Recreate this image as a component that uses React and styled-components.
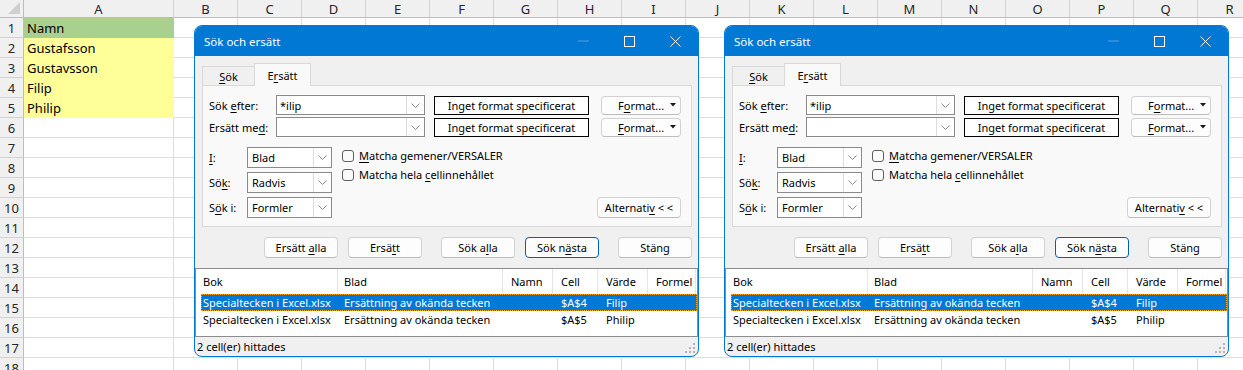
import React from 'react';
import styled, { createGlobalStyle } from 'styled-components';

const GlobalStyle = createGlobalStyle`
  html, body { margin: 0; padding: 0; background: #fff; }
  body { width: 1243px; height: 370px; overflow: hidden; font-family: "Noto Sans", sans-serif; }
  *, *::before, *::after { box-sizing: border-box; }
`;

const Stage = styled.div`
  position: relative;
  width: 1243px;
  height: 370px;
  overflow: hidden;
`;

/* ---------- spreadsheet ---------- */
const Sheet = styled.div`
  display: grid;
  grid-template-columns: 24px 150px repeat(17, 64px);
  grid-template-rows: 18px repeat(18, 20px);
  font-family: "Noto Sans", sans-serif;
  font-size: 13px;
  color: #000;
`;

const ColHead = styled.div`
  background: #f0f0f0;
  border-right: 1px solid #d2d2d2;
  border-bottom: 1px solid #bdbdbd;
  display: flex;
  align-items: center;
  justify-content: center;
  color: #262626;
`;

const Corner = styled(ColHead)`
  position: relative;
  border-right-color: #bdbdbd;
  &::after {
    content: '';
    position: absolute;
    right: 3px;
    bottom: 3px;
    width: 12px;
    height: 12px;
    background: #cfcfcf;
    clip-path: polygon(100% 0, 100% 100%, 0 100%);
  }
`;

const RowHead = styled.div`
  background: #f0f0f0;
  border-right: 1px solid #bdbdbd;
  border-bottom: 1px solid #d2d2d2;
  display: flex;
  align-items: center;
  justify-content: center;
  color: #262626;
`;

const Cell = styled.div`
  background: ${p => p.$fill || '#fff'};
  border-right: 1px solid ${p => p.$fill || '#dcdcdc'};
  border-bottom: 1px solid ${p => p.$fill || '#dcdcdc'};
  display: flex;
  align-items: center;
  padding: 1px 0 0 3px;
  white-space: nowrap;
`;

/* ---------- dialog ---------- */
const Window = styled.div`
  position: absolute;
  left: ${p => p.$left}px;
  top: 25px;
  width: 505px;
  height: 332px;
  border: 1px solid #0078d4;
  border-radius: 8px;
  overflow: hidden;
  background: #f0f0f0;
  display: flex;
  flex-direction: column;
  font-family: "Noto Sans", sans-serif;
  font-size: 11px;
  color: #000;
`;

const TitleBar = styled.div`
  height: 30px;
  flex: none;
  background: #0078d4;
  color: #fff;
  display: flex;
  align-items: center;
  padding-left: 9px;
  font-size: 11.5px;
`;

const Title = styled.div`
  flex: 1;
`;

const CaptionButton = styled.div`
  width: 46px;
  height: 30px;
  display: flex;
  align-items: center;
  justify-content: center;
`;

const Body = styled.div`
  flex: 1;
  display: flex;
  flex-direction: column;
`;

const TabStrip = styled.div`
  height: 29px;
  flex: none;
  display: flex;
  align-items: flex-end;
  padding-left: 7px;
`;

const Tab = styled.div`
  position: relative;
  z-index: ${p => (p.$active ? 1 : 0)};
  width: ${p => (p.$active ? 57 : 52)}px;
  height: ${p => (p.$active ? 23 : 19)}px;
  margin-bottom: ${p => (p.$active ? -1 : 0)}px;
  background: ${p => (p.$active ? '#f9f9f9' : '#f0f0f0')};
  border: 1px solid #d9d9d9;
  border-bottom: none;
  border-right: ${p => (p.$active ? '1px solid #d9d9d9' : 'none')};
  display: flex;
  align-items: center;
  justify-content: center;
  padding-top: ${p => (p.$active ? 0 : 1)}px;
`;

const Panel = styled.div`
  height: 142px;
  flex: none;
  margin: 0 6px 0 7px;
  background: #f9f9f9;
  border: 1px solid #d9d9d9;
  padding: 9px 10px 0 6px;
  display: flex;
  flex-direction: column;
`;

const FieldRow = styled.div`
  display: flex;
  align-items: center;
  height: 20px;
  & + & { margin-top: 2px; }
`;

const FieldLabel = styled.div`
  width: ${p => p.$w}px;
  flex: none;
  white-space: nowrap;
`;

const U = styled.span`
  text-decoration: underline;
  text-underline-offset: 2px;
`;

const Combo = styled.div`
  width: ${p => p.$w}px;
  height: ${p => p.$h}px;
  flex: none;
  background: #fff;
  border: 1px solid #8a8a8a;
  display: flex;
`;

const ComboText = styled.div`
  flex: 1;
  display: flex;
  align-items: center;
  padding-left: ${p => p.$pad}px;
`;

const ComboArrow = styled.div`
  width: 18px;
  border-left: 1px solid #dedede;
  display: flex;
  align-items: center;
  justify-content: center;
`;

const FormatBox = styled.div`
  margin-left: 9px;
  width: 155px;
  height: 19px;
  flex: none;
  background: #fff;
  border: 1px solid #000;
  display: flex;
  align-items: center;
  justify-content: center;
`;

const Button = styled.div`
  width: ${p => p.$w}px;
  height: ${p => p.$h || 21}px;
  flex: none;
  margin-left: ${p => p.$ml || 0}px;
  background: #fdfdfd;
  border: 1px solid ${p => (p.$primary ? '#005fb8' : '#d2d2d2')};
  border-bottom-color: ${p => (p.$primary ? '#005fb8' : '#bcbcbc')};
  border-radius: 4px;
  display: flex;
  align-items: center;
  justify-content: center;
  white-space: pre;
`;

const FormatButton = styled(Button)`
  justify-content: flex-start;
  padding: 0 4px 0 16px;
`;

const FormatText = styled.span`
  flex: 1;
`;

const Options = styled.div`
  margin-top: 10px;
  height: 72px;
  display: flex;
`;

const Selects = styled.div`
  display: grid;
  grid-template-columns: 38px 85px;
  grid-auto-rows: 21px;
  row-gap: 4px;
  align-items: center;
`;

const Checks = styled.div`
  margin-left: 10px;
  margin-top: -1px;
  display: flex;
  flex-direction: column;
`;

const CheckRow = styled.div`
  height: 19px;
  display: flex;
  align-items: center;
  gap: 5px;
`;

const CheckBox = styled.div`
  width: 12px;
  height: 12px;
  border: 1px solid #5f5f5f;
  border-radius: 3px;
  background: #fbfbfb;
`;

const AltButton = styled(Button)`
  margin-left: auto;
  align-self: flex-end;
  margin-bottom: 1px;
`;

const ButtonRow = styled.div`
  margin-top: 10px;
  height: 21px;
  flex: none;
  display: flex;
  justify-content: flex-end;
  padding-right: 6px;
`;

const List = styled.div`
  margin-top: 10px;
  height: 69px;
  flex: none;
  background: #fff;
  border: 1px solid #8c8c8c;
  padding-left: 5px;
`;

const Columns = styled.div`
  display: grid;
  grid-template-columns: 137px 165px 50px 45px 50px 48px;
  height: ${p => p.$h}px;
  background: ${p => (p.$selected ? '#0078d7' : 'transparent')};
  color: ${p => (p.$selected ? '#fff' : '#000')};
  outline: ${p => (p.$selected ? '1px dotted #f7a21a' : 'none')};
  outline-offset: -1px;
`;

const HeadCell = styled.div`
  padding-left: ${p => p.$pad}px;
  border-right: 1px solid #e5e5e5;
  display: flex;
  align-items: center;
  white-space: nowrap;
`;

const DataCell = styled.div`
  padding-left: ${p => p.$pad}px;
  display: flex;
  align-items: center;
  white-space: nowrap;
  overflow: hidden;
`;

const StatusBar = styled.div`
  flex: 1;
  display: flex;
  align-items: center;
  padding-left: 2px;
`;

const Grip = styled.svg`
  align-self: flex-end;
  margin: 0 2px 2px auto;
`;

/* ---------- icons ---------- */
const Chevron = () => (
  <svg width="9" height="5" viewBox="0 0 9 5">
    <path d="M0.5 0.5 L4.5 4.5 L8.5 0.5" fill="none" stroke="#8c8c8c" strokeWidth="1" />
  </svg>
);

const Caret = () => (
  <svg width="6" height="4" viewBox="0 0 6 4">
    <path d="M0 0 H6 L3 3.5 Z" fill="#1a1a1a" />
  </svg>
);

const columns = [
  { key: 'bok', title: 'Bok', pad: 2 },
  { key: 'blad', title: 'Blad', pad: 6 },
  { key: 'namn', title: 'Namn', pad: 8 },
  { key: 'cell', title: 'Cell', pad: 8 },
  { key: 'varde', title: 'Värde', pad: 8 },
  { key: 'formel', title: 'Formel', pad: 8 },
];

const results = [
  { bok: 'Specialtecken i Excel.xlsx', blad: 'Ersättning av okända tecken', namn: '', cell: '$A$4', varde: 'Filip', formel: '', selected: true },
  { bok: 'Specialtecken i Excel.xlsx', blad: 'Ersättning av okända tecken', namn: '', cell: '$A$5', varde: 'Philip', formel: '' },
];

const Select = ({ children }) => (
  <Combo $w={85} $h={21}>
    <ComboText $pad={4}>{children}</ComboText>
    <ComboArrow><Chevron /></ComboArrow>
  </Combo>
);

function FindDialog({ left }) {
  return (
    <Window $left={left}>
      <TitleBar>
        <Title>Sök och ersätt</Title>
        <CaptionButton>
          <svg width="11" height="2" viewBox="0 0 11 2"><rect x="0" y="0.5" width="11" height="1" fill="rgba(255,255,255,0.32)" /></svg>
        </CaptionButton>
        <CaptionButton>
          <svg width="11" height="11" viewBox="0 0 11 11"><rect x="0.5" y="0.5" width="10" height="10" fill="none" stroke="#fff" strokeWidth="1" /></svg>
        </CaptionButton>
        <CaptionButton>
          <svg width="11" height="11" viewBox="0 0 11 11"><path d="M0.5 0.5 L10.5 10.5 M10.5 0.5 L0.5 10.5" stroke="#fff" strokeWidth="1" /></svg>
        </CaptionButton>
      </TitleBar>
      <Body>
        <TabStrip>
          <Tab><span><U>S</U>ök</span></Tab>
          <Tab $active><span>E<U>r</U>sätt</span></Tab>
        </TabStrip>
        <Panel>
          <FieldRow>
            <FieldLabel $w={67}>Sök <U>e</U>fter:</FieldLabel>
            <Combo $w={149} $h={20}>
              <ComboText $pad={3}>*ilip</ComboText>
              <ComboArrow><Chevron /></ComboArrow>
            </Combo>
            <FormatBox>Inget format specificerat</FormatBox>
            <FormatButton $w={80} $h={19} $ml={12}>
              <FormatText>F<U>o</U>rmat...</FormatText>
              <Caret />
            </FormatButton>
          </FieldRow>
          <FieldRow>
            <FieldLabel $w={67}>Ersätt me<U>d</U>:</FieldLabel>
            <Combo $w={149} $h={20}>
              <ComboText $pad={3} />
              <ComboArrow><Chevron /></ComboArrow>
            </Combo>
            <FormatBox>Inget format specificerat</FormatBox>
            <FormatButton $w={80} $h={19} $ml={12}>
              <FormatText><U>F</U>ormat...</FormatText>
              <Caret />
            </FormatButton>
          </FieldRow>
          <Options>
            <Selects>
              <FieldLabel $w={38}><U>I</U>:</FieldLabel>
              <Select>Blad</Select>
              <FieldLabel $w={38}>Sö<U>k</U>:</FieldLabel>
              <Select>Radvis</Select>
              <FieldLabel $w={38}>S<U>ö</U>k i:</FieldLabel>
              <Select>Formler</Select>
            </Selects>
            <Checks>
              <CheckRow><CheckBox /><span><U>M</U>atcha gemener/VERSALER</span></CheckRow>
              <CheckRow><CheckBox /><span>Matcha hela <U>c</U>ellinnehållet</span></CheckRow>
            </Checks>
            <AltButton $w={84}><span>Alternati<U>v</U> &lt; &lt;</span></AltButton>
          </Options>
        </Panel>
        <ButtonRow>
          <Button $w={74}><span>Ersätt <U>a</U>lla</span></Button>
          <Button $w={74} $ml={10}><span>Ersä<U>t</U>t</span></Button>
          <Button $w={74} $ml={19}><span>Sök a<U>l</U>la</span></Button>
          <Button $w={74} $ml={10} $primary><span>Sök n<U>ä</U>sta</span></Button>
          <Button $w={74} $ml={19}><span>Stäng</span></Button>
        </ButtonRow>
        <List>
          <Columns $h={25}>
            {columns.map(c => <HeadCell key={c.key} $pad={c.pad}>{c.title}</HeadCell>)}
          </Columns>
          {results.map((r, i) => (
            <Columns key={i} $h={17} $selected={r.selected}>
              {columns.map(c => <DataCell key={c.key} $pad={c.pad}>{r[c.key]}</DataCell>)}
            </Columns>
          ))}
        </List>
        <StatusBar>
          <span>2 cell(er) hittades</span>
          <Grip width="11" height="11" viewBox="0 0 11 11">
            {[[8, 0], [4, 4], [8, 4], [0, 8], [4, 8], [8, 8]].map(([x, y]) => (
              <rect key={`${x}-${y}`} x={x} y={y} width="2" height="2" fill="#b4b4b4" />
            ))}
          </Grip>
        </StatusBar>
      </Body>
    </Window>
  );
}

const letters = ['A', 'B', 'C', 'D', 'E', 'F', 'G', 'H', 'I', 'J', 'K', 'L', 'M', 'N', 'O', 'P', 'Q', 'R'];
const cellData = {
  1: { text: 'Namn', fill: '#a9d08e' },
  2: { text: 'Gustafsson', fill: '#ffff99' },
  3: { text: 'Gustavsson', fill: '#ffff99' },
  4: { text: 'Filip', fill: '#ffff99' },
  5: { text: 'Philip', fill: '#ffff99' },
};

export default function App() {
  const rows = Array.from({ length: 18 }, (_, i) => i + 1);
  return (
    <>
      <GlobalStyle />
      <Stage>
        <Sheet>
          <Corner />
          {letters.map(l => <ColHead key={l}>{l}</ColHead>)}
          {rows.map(r => (
            <React.Fragment key={r}>
              <RowHead>{r}</RowHead>
              {letters.map(l => {
                const d = l === 'A' ? cellData[r] : null;
                return <Cell key={l} $fill={d?.fill}>{d?.text}</Cell>;
              })}
            </React.Fragment>
          ))}
        </Sheet>
        <FindDialog left={194} />
        <FindDialog left={724} />
      </Stage>
    </>
  );
}
